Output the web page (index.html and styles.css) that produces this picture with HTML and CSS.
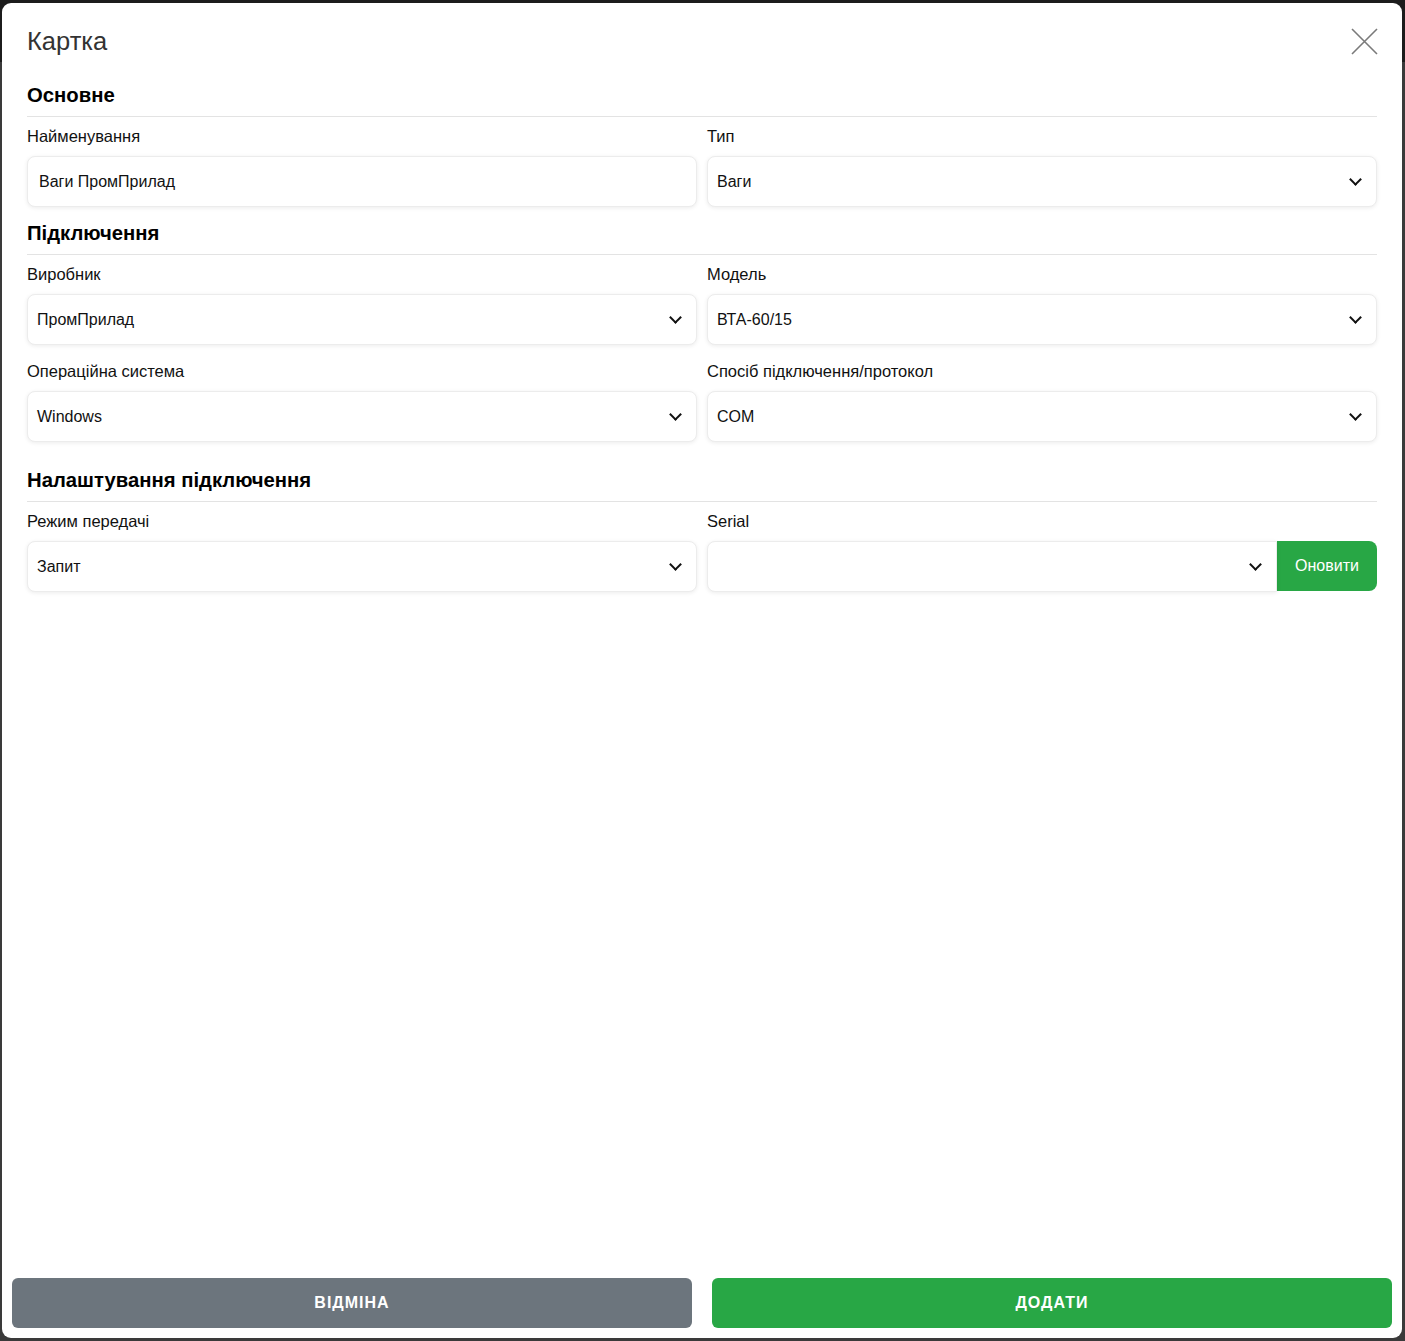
FILE: index.html
```html
<!DOCTYPE html>
<html lang="uk">
<head>
  <meta charset="UTF-8" />
  <meta name="viewport" content="width=device-width, initial-scale=1.0" />
  <title>Картка</title>
  <link rel="stylesheet" href="styles.css">
</head>
<body>
  <div class="modal">
    <!-- Заголовок -->
    <div class="modal-header">
      <h4 class="modal-title">Картка</h4>
      <button class="close-btn" aria-label="Закрити">
        <svg width="27" height="27" viewBox="0 0 27 27">
          <path d="M1 1 L26 26 M26 1 L1 26" stroke="#7a7a7a" stroke-width="1.6" fill="none" />
        </svg>
      </button>
    </div>

    <div class="modal-body">
      <!-- Основне -->
      <div class="section">
        <h5 class="section-title">Основне</h5>
        <div class="row">
          <div class="field">
            <label>Найменування</label>
            <div class="control input">Ваги ПромПрилад</div>
          </div>
          <div class="field">
            <label>Тип</label>
            <div class="control select">Ваги<span class="chevron"></span></div>
          </div>
        </div>
      </div>

      <!-- Підключення -->
      <div class="section section-2">
        <h5 class="section-title">Підключення</h5>
        <div class="row">
          <div class="field">
            <label>Виробник</label>
            <div class="control select">ПромПрилад<span class="chevron"></span></div>
          </div>
          <div class="field">
            <label>Модель</label>
            <div class="control select">ВТА-60/15<span class="chevron"></span></div>
          </div>
        </div>
        <div class="row">
          <div class="field">
            <label>Операційна система</label>
            <div class="control select">Windows<span class="chevron"></span></div>
          </div>
          <div class="field">
            <label>Спосіб підключення/протокол</label>
            <div class="control select">COM<span class="chevron"></span></div>
          </div>
        </div>
      </div>

      <!-- Налаштування підключення -->
      <div class="section section-3">
        <h5 class="section-title">Налаштування підключення</h5>
        <div class="row">
          <div class="field">
            <label>Режим передачі</label>
            <div class="control select">Запит<span class="chevron"></span></div>
          </div>
          <div class="field">
            <label>Serial</label>
            <div class="input-group">
              <div class="control select grouped"><span class="chevron"></span></div>
              <button class="refresh-btn">Оновити</button>
            </div>
          </div>
        </div>
      </div>
    </div>

    <!-- Кнопки -->
    <div class="modal-footer">
      <button class="btn btn-cancel">Відміна</button>
      <button class="btn btn-add">Додати</button>
    </div>
  </div>
</body>
</html>
```

FILE: styles.css
```css
html, body {
  height: 100%;
}

body {
  margin: 0;
  box-sizing: border-box;
  padding: 3px 3px 3px 2px;
  background: linear-gradient(#1c1c1c 62px, #3a3a3a 62px);
  font-family: "Liberation Sans", Arial, sans-serif;
  color: #111;
}

.modal {
  height: 100%;
  background: #fff;
  border-radius: 9px;
  display: flex;
  flex-direction: column;
}

.modal-header {
  display: flex;
  align-items: flex-start;
  justify-content: space-between;
  padding: 25px 24px 0 25px;
}

.modal-title {
  margin: 0;
  font-size: 25.5px;
  line-height: 27px;
  font-weight: normal;
  color: #333;
}

.close-btn {
  background: none;
  border: none;
  padding: 0;
  margin-top: 0;
  cursor: pointer;
  line-height: 0;
}

.modal-body {
  flex: 1;
  padding: 28px 25px 0 25px;
}

.section-title {
  margin: 0;
  font-size: 20.3px;
  line-height: 24px;
  font-weight: bold;
  color: #000;
  padding-bottom: 9px;
  border-bottom: 1px solid #e3e3e3;
}

.section-2 {
  margin-top: 14px;
}

.section-3 {
  margin-top: 26px;
}

.row {
  display: flex;
  gap: 10px;
  margin-top: 9px;
}

.row + .row {
  margin-top: 16px;
}

.field {
  flex: 1;
  min-width: 0;
}

.field label {
  display: block;
  font-size: 16.5px;
  line-height: 20px;
  margin-bottom: 10px;
  color: #111;
}

.control {
  height: 51px;
  box-sizing: border-box;
  border: 1px solid #ececec;
  border-radius: 8px;
  box-shadow: 0 1px 4px rgba(0, 0, 0, 0.08);
  display: flex;
  align-items: center;
  font-size: 16px;
  color: #111;
  background: #fff;
}

.input {
  padding: 0 11px;
}

.select {
  padding: 0 14px 0 9px;
  position: relative;
}

.chevron {
  margin-left: auto;
  width: 7px;
  height: 7px;
  border-right: 2px solid #111;
  border-bottom: 2px solid #111;
  transform: rotate(45deg);
  margin-top: -4px;
  margin-right: 2px;
}

.input-group {
  display: flex;
}

.grouped {
  flex: 1;
  border-radius: 8px 0 0 8px;
}

.refresh-btn {
  width: 100px;
  height: 50px;
  background: #28a745;
  color: #fff;
  border: none;
  border-radius: 0 8px 8px 0;
  font-family: inherit;
  font-size: 16px;
  cursor: pointer;
}

.modal-footer {
  display: flex;
  gap: 20px;
  padding: 0 10px 10px 10px;
}

.btn {
  flex: 1;
  height: 50px;
  border: none;
  border-radius: 6px;
  color: #fff;
  font-family: inherit;
  font-size: 16px;
  font-weight: bold;
  letter-spacing: 1px;
  text-transform: uppercase;
  cursor: pointer;
}

.btn-cancel {
  background: #6c757d;
}

.btn-add {
  background: #28a745;
}
```
